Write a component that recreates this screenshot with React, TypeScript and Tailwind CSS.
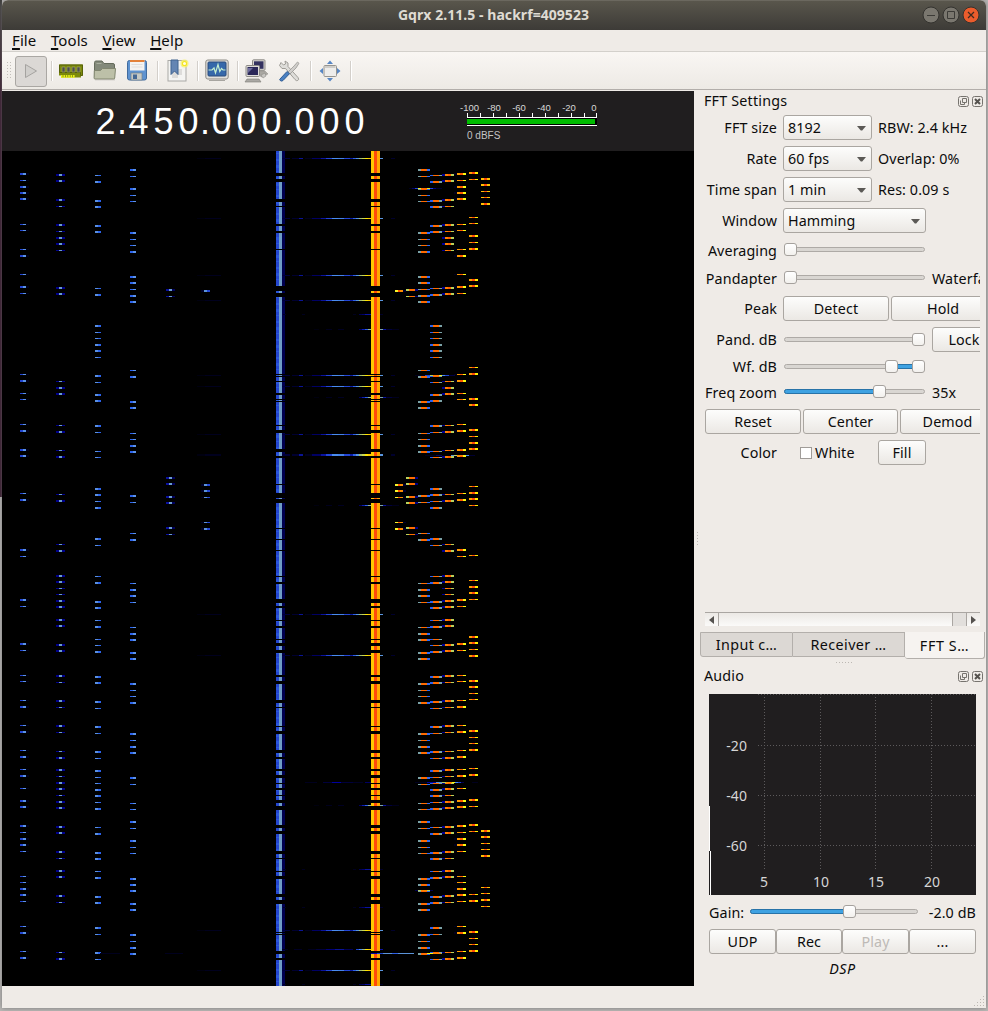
import React from "react";

/* Burst rows per channel: a positive value is the top of a 2px row, a negative one of a 1px row. */
const A = [173, -180, 186, 192, 198, -224, -230, -249, 255, -274, 286, -293, -374, 380, -393, -399, -424, 430, 449, 455, -493, 499, 549, -556, 599, -606, 643, -650, -675, -681, -700, 706, -725, 731, -750, 756, -769, 775, -788, 800, 806, 825, -832, 838, 844, -851, -876, -882, 888, 894, -901, -926, 932, -951, 957];
const B = [174, 180, 199, -206, 224, -231, 237, 243, -250, 287, 293, -381, 387, 393, -425, 431, -450, 456, -494, 500, -544, 550, 575, 581, -588, -594, 600, 606, 619, 625, 644, 650, 675, -682, 700, -707, 725, -732, -751, 757, 769, -776, 782, 788, -795, 801, 807, 826, 832, 851, -858, 870, 876, 895, -902, -952, 958];
const C = [-175, 181, 200, 206, 225, 231, -288, 294, 325, -332, -338, 344, 350, -357, 375, -382, 394, 400, 425, -432, -451, -457, 488, 494, -501, 507, 538, -545, -576, 582, 601, 607, -620, 626, -639, -645, 651, 676, 682, 701, -708, 726, -733, 751, -758, 770, -777, -783, 789, 795, -802, 808, -827, 833, 852, 858, -871, 877, 896, 902, 927, -934, 952, -959];
const D = [169, -176, 188, -195, -201, 232, -239, -245, 251, 276, 282, -289, 295, 301, -370, 376, 401, 407, -433, -439, 445, 451, 495, -502, -533, 539, -583, 589, 595, -602, -627, 633, 639, 652, 658, 683, -690, -696, 702, 733, -740, 746, 752, 777, -784, -803, -809, 821, -828, 840, -847, -853, 878, 884, 890, 903, 909, 934, -941, 947, 953];
const E = [289, -296, 477, 483, 496, 502, 527, -534];
const F = [290, 484, 490, -497, -522, 528];
const G = [172, -179, -217, -223, 235, -242, 248, 279, 285, -367, 373, 398, 404, 429, -436, 442, 448, -486, 492, 498, -505, -555, -580, 586, 592, -599, 636, 642, -649, 655, 680, 686, -693, -699, 730, -737, -743, 749, -768, 774, 799, -806, 824, -831, -894, 900, 931, -938, -944, 950];
const H = [178, 184, -191, -197, 203, 830, 836, -843, -849, 855, -887, -893, 899, -906];

type Seg = [number, number, string];
const CHANNELS: { rows: number[]; segs: Seg[] }[] = [
  { rows: A, segs: [[20, 3, "#2346d6"], [23, 3, "#5b93e6"], [26, 3, "#00001e"], [454, 3, "#00001e"], [457, 3, "#ff9a00"], [460, 3, "#ff5a00"], [463, 3, "#fbfb10"]] },
  { rows: B, segs: [[56, 3, "#00008c"], [59, 3, "#6b9ccd"], [62, 3, "#00008c"], [442, 3, "#000096"], [445, 3, "#ff8400"], [448, 3, "#ff5a00"], [451, 3, "#b9d35c"]] },
  { rows: C, segs: [[95, 3, "#5a90e2"], [98, 3, "#2b63ec"], [430, 3, "#2c64f0"], [433, 6, "#ff6a00"], [439, 3, "#7ba3a8"]] },
  { rows: D, segs: [[130, 3, "#2c64f0"], [133, 3, "#5b93ec"], [418, 3, "#7ba3a8"], [421, 6, "#ff6a00"], [427, 3, "#2e6cf4"]] },
  { rows: E, segs: [[166, 3, "#0a10a0"], [169, 3, "#6b9ccd"], [172, 3, "#00005c"], [406, 3, "#b9d35c"], [409, 6, "#ff6e00"], [415, 3, "#000082"]] },
  { rows: F, segs: [[201, 3, "#00002a"], [204, 3, "#5b93d8"], [207, 3, "#2346d6"], [395, 3, "#f6f628"], [398, 2, "#ff5000"], [400, 3, "#ff8c00"], [403, 3, "#000030"]] },
  { rows: G, segs: [[469, 3, "#ffa000"], [472, 3, "#ff4a0a"], [475, 3, "#ffee00"]] },
  { rows: H, segs: [[481, 3, "#ffc000"], [484, 3, "#ff4a0a"], [487, 3, "#ffc400"]] },
];

const GAPS: [number, number][] = [
  [173, 176], [179, 182], [199, 202], [206, 207], [224, 226], [231, 233], [249, 250], [286, 291], [293, 297],
  [374, 375], [376, 377], [381, 382], [393, 395], [399, 400], [401, 402], [425, 426], [430, 433], [449, 452], [456, 458],
  [484, 485], [493, 498], [499, 503], [528, 529], [539, 540], [550, 551], [576, 577], [582, 584], [599, 603], [606, 608],
  [620, 621], [626, 628], [639, 640], [643, 646], [650, 653], [675, 677], [681, 684], [700, 703], [707, 708], [726, 727],
  [731, 734], [750, 753], [757, 759], [769, 771], [775, 778], [783, 784], [788, 790], [795, 796], [800, 803], [806, 810],
  [825, 828], [831, 834], [851, 854], [858, 859], [871, 872], [876, 879], [894, 897], [900, 904], [932, 933], [934, 935],
  [951, 954], [958, 960],
];

const STRONG: Seg[] = [
  [197, 8, "#000010"], [205, 16, "#00001e"], [282, 8, "#00003c"], [292, 7, "#000030"], [299, 4, "#0a1496"], [305, 9, "#00001e"],
  [312, 9, "#000064"], [321, 5, "#0a14a0"], [326, 6, "#2346d6"], [332, 6, "#4a8cf0"], [338, 6, "#4682e8"], [344, 6, "#2346d6"],
  [350, 3, "#0a1eaa"], [353, 3, "#2d5fe6"], [356, 3, "#5a96e0"], [359, 3, "#a0be78"], [362, 3, "#c8d750"], [365, 3, "#ffe600"],
  [368, 3, "#ffc800"], [380, 3, "#5a96e0"], [391, 4, "#00002d"],
];
const SOFT: Seg[] = [
  [282, 6, "#00001e"], [294, 8, "#000024"], [308, 8, "#00001e"], [316, 10, "#00003c"], [326, 9, "#000078"], [335, 9, "#0a1496"],
  [344, 9, "#00005a"], [356, 3, "#1e46d2"], [359, 3, "#4a8cf0"], [362, 3, "#96b496"], [365, 3, "#ffe600"], [368, 3, "#ffc800"], [380, 3, "#0a14a0"],
];
const SHORT: Seg[] = [
  [314, 5, "#00000f"], [326, 6, "#00001e"], [338, 6, "#000022"], [359, 3, "#000064"], [362, 3, "#0a1eb4"], [365, 3, "#2d5fe6"],
  [368, 3, "#96b496"], [380, 3, "#7ba3a8"], [383, 3, "#0a14a0"], [386, 6, "#00003c"], [392, 7, "#00001e"],
];
const FAINT: Seg[] = [[283, 3, "#000028"], [302, 3, "#00001e"], [353, 3, "#00001e"], [359, 3, "#000050"], [362, 3, "#00006e"], [365, 3, "#0a14a0"], [368, 3, "#0a14a0"], [380, 3, "#000028"]];
const DIM: Seg[] = [[305, 12, "#00001e"], [323, 9, "#00003c"], [332, 9, "#0000a0"], [341, 12, "#00003c"], [353, 10, "#000024"], [365, 6, "#000064"]];
const RIGHT: Seg[] = [[409, 3, "#00001e"], [412, 3, "#000064"], [415, 3, "#1e46d2"], [418, 3, "#f0f020"], [421, 6, "#ff6a00"], [427, 3, "#f0f020"], [430, 3, "#2346d6"], [433, 3, "#00007c"], [436, 6, "#000032"]];
const RIGHT2: Seg[] = [[415, 12, "#00001e"], [427, 9, "#0000a0"], [436, 6, "#5b93d8"], [442, 4, "#b9d35c"], [446, 6, "#ff9000"], [452, 3, "#fbfb10"], [455, 3, "#4a8cf0"], [458, 3, "#1e46d2"], [461, 3, "#000050"], [472, 6, "#00001e"]];
const RIGHT3: Seg[] = [[415, 10, "#00001e"], [425, 5, "#1e46d2"], [430, 3, "#b9d35c"], [433, 6, "#ff7800"], [439, 3, "#f0f020"], [442, 3, "#4a8cf0"], [445, 4, "#1e46d2"], [449, 6, "#000046"]];
const STREAKS: [number, Seg[]][] = [
  [158, STRONG], [218, STRONG], [275, STRONG], [300, STRONG], [386, STRONG], [434, STRONG], [454, STRONG], [455, STRONG],
  [375, STRONG], [614, STRONG], [655, STRONG], [930, STRONG], [949, SOFT], [970, STRONG],
  [329, SHORT], [397, SHORT], [505, SHORT], [805, SHORT], [314, FAINT], [869, FAINT], [907, FAINT], [984, FAINT], [782, DIM],
  [188, RIGHT], [375, RIGHT3], [782, RIGHT2], [890, [[415, 3, "#000050"], [418, 3, "#b9d35c"], [421, 6, "#ff8400"], [427, 3, "#b9d35c"], [430, 3, "#000050"]]],
  [455, [[425, 15, "#00001e"], [436, 6, "#000064"], [451, 3, "#5b93d8"], [454, 3, "#b9d35c"], [457, 6, "#ff8400"], [463, 3, "#f0f020"], [466, 3, "#4a8cf0"], [469, 6, "#000032"]]],
  [953, [[100, 20, "#00001e"], [165, 18, "#00001e"], [371, 6, "#0000a0"], [377, 6, "#1e46d2"], [383, 9, "#5b93d8"], [392, 6, "#2d5fe6"], [398, 16, "#5b93d8"], [418, 3, "#7ba3a8"], [427, 6, "#fbfb10"], [433, 8, "#ff8400"]]],
];

function Waterfall() {
  return (
    <svg className="block h-[835px] w-[692px] bg-black" viewBox="2 151 692 835" shapeRendering="crispEdges">
      <rect x="276" y="151" width="3" height="835" fill="#2446cf" />
      {Array.from({ length: 139 }, (_, i) => (
        <rect key={i} x="276" y={153 + i * 6} width="3" height={(i % 3) + 1} fill="#2a55dc" />
      ))}
      <rect x="279" y="151" width="3" height="835" fill="#6f9dc6" />
      <rect x="282" y="151" width="3" height="835" fill="#000050" />
      <rect x="371" y="151" width="3" height="835" fill="#ffc800" />
      <rect x="374" y="151" width="3" height="835" fill="#ff4b0a" />
      <rect x="377" y="151" width="3" height="835" fill="#ffa800" />
      {GAPS.map(([a, b]) => (
        <g key={a} fill="#000">
          <rect x="276" y={a} width="9" height={b - a} />
          <rect x="371" y={a} width="9" height={b - a} />
        </g>
      ))}
      {CHANNELS.map((c, i) =>
        c.rows.map((r) =>
          c.segs.map(([x, w, f]) => <rect key={`${i}-${r}-${x}`} x={x} y={Math.abs(r)} width={w} height={r < 0 ? 1 : 2} fill={f} />)
        )
      )}
      {STREAKS.map(([y, segs], i) =>
        segs.map(([x, w, f]) => <rect key={`s${i}-${x}`} x={x} y={y} width={w} height="1" fill={f} />)
      )}
    </svg>
  );
}

const BTN_BASE = "flex h-[25px] shrink-0 items-center rounded-[3px] border border-[#aaa6a1] bg-linear-to-b from-[#fdfdfc] to-[#ebe8e4] ";
const BTN = BTN_BASE + "justify-center ";

function Combo({ text, wide }: { text: string; wide?: boolean }) {
  return (
    <div className={BTN_BASE + "justify-between pr-[5px] pl-[4px] " + (wide ? "w-[143px]" : "w-[89px]")}>
      <span>{text}</span>
      <svg className="mt-0.5" width="9" height="5" viewBox="0 0 9 5"><path d="M0 0h9L5.200 4.600H3.800z" fill="#5b5956" /></svg>
    </div>
  );
}

function Slider({ width, handles, fill }: { width: number; handles: number[]; fill?: [number, number] }) {
  return (
    <div className="relative h-[13px] shrink-0" style={{ width }}>
      <div className="absolute inset-x-0 top-[4px] h-[5px] rounded-sm border border-[#aeaaa6] bg-[#d9d6d2]" />
      {fill && <div className="absolute top-[4px] h-[5px] rounded-sm border border-[#2873a8] bg-[#3fa2e2]" style={{ left: fill[0], width: fill[1] - fill[0] }} />}
      {handles.map((h) => (
        <div key={h} className="absolute top-0 size-[13px] rounded-[3px] border border-[#a5a19d] bg-linear-to-b from-white to-[#f3f1ee]" style={{ left: h }} />
      ))}
    </div>
  );
}

function Row({ label, h, low, children }: { label: string; h: string; low?: boolean; children: React.ReactNode }) {
  return (
    <div className={"flex shrink-0 items-center " + h}>
      <div className={"mr-1.5 w-[83px] shrink-0 text-right " + (low ? "pt-0.5" : "")}>{label}</div>
      {children}
    </div>
  );
}

function DockTitle({ text }: { text: string }) {
  return (
    <div className="flex h-5 shrink-0 items-center pr-[3px] pl-[10px]">
      <span className="grow tracking-[0.2px]">{text}</span>
      <svg className="mr-[3px]" width="11" height="11" viewBox="0 0 11 11" fill="none" stroke="#77746f">
        <rect x=".5" y=".5" width="10" height="10" rx="2" />
        <path d="M4.500 2.500h4v4h-4zM2.500 4.500v4h4v-2" />
      </svg>
      <svg width="11" height="11" viewBox="0 0 11 11" fill="none" stroke="#77746f">
        <rect x=".5" y=".5" width="10" height="10" rx="2" />
        <path d="M3 3l5 5M8 3L3 8" stroke="#55524e" strokeWidth="2" />
      </svg>
    </div>
  );
}

function Sep({ m }: { m: string }) {
  return <div className={"h-5 w-px shrink-0 bg-[#d3cfca] shadow-[1px_0_0_#fff] " + m} />;
}

function Icon({ m, children }: { m: string; children: React.ReactNode }) {
  return <svg className={"shrink-0 " + m} width="24" height="24" viewBox="0 0 24 24">{children}</svg>;
}

function Toolbar() {
  return (
    <div className="flex h-[39px] shrink-0 items-center border-t border-b border-t-[#d3d0cb] border-b-[#b2aeaa] bg-linear-to-b from-[#f9f6f3] to-[#edeae5]">
      <svg className="ml-[5px] shrink-0" width="5" height="17" viewBox="0 0 5 17" fill="#c2beb9">
        {[0, 3, 6, 9, 12, 15].map((y) => <g key={y}><rect y={y} width="1" height="1" /><rect x="3" y={y} width="1" height="1" /></g>)}
      </svg>
      <div className="mt-px ml-[3px] flex h-[31px] w-8 shrink-0 items-center justify-center rounded-[3px] border border-[#aaa7a3] bg-[#dbd8d5]">
        <svg width="14" height="16" viewBox="0 0 14 16"><path d="M1.500 1.500L12.500 8 1.500 14.500z" fill="#d0cecb" stroke="#a5a3a0" /></svg>
      </div>
      <Sep m="ml-[4px]" />
      <Icon m="ml-[7px]">
        <path d="M0 5.500h24v11h-2v2H2v-2H0z" fill="#7c8a0b" />
        <path d="M.5 6h23v10.500h-2v-3H.5z" fill="none" stroke="#56610a" />
        <g fill="#4d4f4b" stroke="#a4a86d" strokeWidth=".6"><path d="M3 8h3v5H3zM8 8h3v5H8zM13 8h3v5h-3zM18 8h3v5h-3z" /></g>
        <path d="M2 17.500h14" fill="none" stroke="#e7ef1c" strokeWidth="3" strokeDasharray="1.600 .8" />
      </Icon>
      <Icon m="ml-[10px]">
        <path d="M1.500 18V3.500q0-1.500 1.500-1.500h6l2 2.500h9q1.500 0 1.500 1.500v6H1.500z" fill="#83897a" stroke="#656b5c" />
        <path d="M3.500 4.500h5" stroke="#a9ae9f" />
        <path d="M1.300 11.500h6.200l2-2h13l-.8 9.500q-.1 1-1 1H2q-.9 0-.9-1z" fill="#bdc0a8" stroke="#81866f" />
        <path d="M2 20.800h20" stroke="#aaa8a2" opacity=".6" />
      </Icon>
      <Icon m="ml-[8px]">
        <rect x="2.500" y="1.500" width="19" height="19.500" rx="2" fill="#5f93d0" stroke="#426c9e" />
        <rect x="5" y="1" width="14.500" height="10.500" fill="#f4f3f2" />
        <rect x="5" y="1" width="14.500" height="2" fill="#e3813a" />
        <path d="M6.500 5.500h11M6.500 8h11" stroke="#dfdedd" />
        <rect x="6" y="14" width="11" height="7" fill="#c6c9c4" stroke="#73828e" strokeWidth=".7" />
        <rect x="8" y="15.500" width="4" height="4.500" fill="#456894" />
      </Icon>
      <Sep m="ml-[8px]" />
      <Icon m="ml-[8px]">
        <rect x="2" y="1.500" width="18" height="20.500" fill="#f4f4f2" stroke="#aaa9a6" />
        <path d="M6 10h10v6h-4v3H6z" fill="#dddcda" />
        <path d="M5 1h7v14.500L8.500 12 5 15.500z" fill="#6485b3" stroke="#3f628f" />
        <circle cx="18.500" cy="4.500" r="4" fill="#f9f26b" opacity=".8" />
        <circle cx="18.500" cy="4.500" r="2.600" fill="#f5e51e" />
        <circle cx="18.500" cy="4.500" r="1.500" fill="#fffde5" />
      </Icon>
      <Sep m="ml-[7px]" />
      <Icon m="ml-[7px]">
        <rect x=".8" y="1" width="22.400" height="19" rx="2" fill="#e1e0dc" stroke="#8c8a85" />
        <rect x="3" y="3" width="18" height="14" rx="1" fill="#3568aa" stroke="#2a4b7b" />
        <path d="M3.500 11h3.500l2-2 1.500 5L13 5.500l1.800 7 1.700-3L18 11h2.500" fill="none" stroke="#c4efcf" strokeWidth="1.200" />
        <path d="M4 21.500h16" stroke="#a7a5a0" />
      </Icon>
      <Sep m="ml-[8px]" />
      <Icon m="ml-[6px]">
        <rect x="8.500" y=".8" width="12.500" height="10.500" rx="1" fill="#d7d5d0" stroke="#8d8b86" />
        <rect x="10" y="2.300" width="9.500" height="7.500" fill="#34325f" />
        <path d="M14 12h7l3 3-7 3z" fill="#aaa8a2" stroke="#8d8b86" strokeWidth=".5" />
        <rect x="2" y="6.500" width="13.500" height="11" rx="1" fill="#dfddd9" stroke="#8d8b86" />
        <rect x="3.500" y="8" width="10.500" height="8" fill="#2b2858" />
        <path d="M4 9l5 0-5 5z" fill="#6f6d9d" />
        <path d="M3 20h12l2 3H1z" fill="#aaa8a4" stroke="#7e7c77" strokeWidth=".6" />
        <path d="M17 16l4-2 1 3-3 2z" fill="#c8c6c2" stroke="#8d8b86" strokeWidth=".6" />
      </Icon>
      <Icon m="ml-[9px]">
        <path d="M4 3.500l2.500 2.500 2-1-.5-3 3 2v3.500L21 18.500q1.500 2-.3 3-1.200.8-2.700-1L8.500 9.500 5 9.500 2.500 6.500z" fill="#deddd9" stroke="#96948f" strokeWidth=".9" />
        <path d="M20.500 3l1.500 1.300-3 4.700-6 6-2-2 6-6z" fill="#d0cecb" stroke="#9b9994" strokeWidth=".8" />
        <path d="M3 20l7-7.500 2.500 2.200L6 21.500q-1.500 1.200-2.800 0-1-.8-.2-1.500z" fill="#4a80c1" stroke="#315d94" />
      </Icon>
      <Sep m="ml-[9px]" />
      <Icon m="ml-[7px]">
        <rect x="6" y="6.500" width="12.500" height="11" rx="1" fill="#eeedeb" stroke="#96948f" />
        <path d="M7 8h10.500" stroke="#c4c2be" strokeWidth="1.500" />
        <path d="M12 1.500L15 5H9zM12 22.500L15 19H9zM1.500 12L5 9v6zM22.500 12L19 9v6z" fill="#5686c4" />
      </Icon>
      <Sep m="ml-[8px]" />
    </div>
  );
}

function Dots({ className, cols, rows }: { className?: string; cols: number; rows: number }) {
  return (
    <svg className={className} width={cols * 3} height={rows * 3} fill="#bcb8b3">
      {Array.from({ length: cols * rows }, (_, i) => <rect key={i} x={(i % cols) * 3} y={Math.floor(i / cols) * 3} width="1" height="1" />)}
    </svg>
  );
}

function Meter() {
  return (
    <svg className="block" width="150" height="50" viewBox="455 98 150 50">
      <g fill="#d8d8d8" fontFamily="Liberation Sans, Arial, sans-serif" fontSize="9.500" textAnchor="middle">
        {["-100", "-80", "-60", "-40", "-20", "0"].map((t, i) => <text key={t} x={[469.5, 494, 519, 544, 569, 594][i]} y="111">{t}</text>)}
        <text x="467" y="139" textAnchor="start" fill="#c4c4c4" fontSize="10">0 dBFS</text>
      </g>
      <g shapeRendering="crispEdges">
        <path d="M467 117h130v1h-130zM467 125h130v1h-130z" fill="#fff" />
        {Array.from({ length: 11 }, (_, i) => <rect key={i} x={i === 10 ? 596 : 467 + i * 13} y="113" width="1" height="4" fill="#fff" />)}
        <rect x="467" y="118" width="130" height="7" fill="#000" />
        <rect x="467" y="119" width="128" height="5" fill="#00bb00" />
      </g>
    </svg>
  );
}

function AudioPlot() {
  return (
    <svg className="block" width="267" height="201" viewBox="709 694 267 201">
      <rect x="709" y="694" width="267" height="201" fill="#201e1f" />
      <g stroke="#5c5a5b" strokeDasharray="1 2" shapeRendering="crispEdges">
        {[764.5, 820.5, 875.5, 931.5].map((x) => <path key={x} d={`M${x} 694V869`} />)}
        {[694.5, 745.5, 795.5, 845.5].map((y) => <path key={y} d={`M758 ${y}H976`} />)}
      </g>
      <path d="M709.500 806v45M710.500 851v44" stroke="#fff" shapeRendering="crispEdges" />
      <g fill="#d6d6d6" fontSize="14">
        {[["-20", 751], ["-40", 801], ["-60", 851]].map(([t, y]) => <text key={t} x="747" y={y} textAnchor="end">{t}</text>)}
        {[["5", 764], ["10", 821], ["15", 876], ["20", 932]].map(([t, x]) => <text key={t} x={x} y="887" textAnchor="middle">{t}</text>)}
      </g>
    </svg>
  );
}

export default function App() {
  return (
    <div className="flex h-[1011px] w-[988px] overflow-hidden bg-[#bab8b6] font-['Noto_Sans',sans-serif] text-[14.3px] leading-5 tracking-[0.1px] whitespace-nowrap text-[#0c0c0c]">
      <div className="h-[497px] w-0.5 shrink-0 bg-linear-to-b from-[#3a3a38] via-[#2c0a22] via-20% to-[#2c0a22]" />
      <div className="relative flex h-[1008px] w-[984px] shrink-0 flex-col overflow-hidden rounded-t-[6px] bg-[#efebe7] shadow-[0_0_5px_#777]">
        <header className="relative flex h-[30px] shrink-0 items-center justify-center border-t border-[#6b685f] bg-linear-to-b from-[#59564c] to-[#3d3b37] pb-0.5">
          <span className="mr-px text-[14px] font-bold tracking-[0.05px] text-[#dfdbd2]">Gqrx 2.11.5 - hackrf=409523</span>
          <svg className="absolute top-[5px] right-[6px]" width="58" height="18" viewBox="0 0 58 18" fill="none">
            <circle cx="9" cy="9" r="8" fill="#7a776f" stroke="#34332f" />
            <circle cx="29" cy="9" r="8" fill="#7a776f" stroke="#34332f" />
            <circle cx="49" cy="9" r="8" fill="#eb5c2c" stroke="#34332f" />
            <path d="M5 9.500h8M25.500 5.500h7v7h-7z" stroke="#3c3b37" />
            <path d="M46 6l6 6M52 6l-6 6" stroke="#3c2a20" strokeWidth="1.200" />
          </svg>
        </header>
        <nav className="flex h-[21px] shrink-0 items-center gap-[14.5px] pb-0.5 pl-[10px] text-[15px] tracking-[0.1px]">
          {["File", "Tools", "View", "Help"].map((m) => (
            <span key={m}><span className="underline decoration-2 underline-offset-2">{m[0]}</span>{m.slice(1)}</span>
          ))}
        </nav>
        <Toolbar />
        <div className="mt-px flex h-[895px] shrink-0">
          <main className="w-[692px] shrink-0">
            <div className="flex h-[60px] items-start bg-[#201e1f]">
              <div className="ml-[91px] flex h-[62px] w-[362px] items-center font-['Liberation_Sans',Arial,sans-serif] text-[36px] tracking-normal text-white">
                {"2.450.000.000".split("").map((c, i) => (
                  <span key={i} className={c === "." ? "flex w-[8px] justify-center" : "flex w-[25px] justify-center"}>{c}</span>
                ))}
              </div>
              <div className="pt-[7px] tracking-normal"><Meter /></div>
            </div>
            <Waterfall />
          </main>
          <aside className="flex w-[292px] shrink-0 flex-col">
            <div className="flex h-[535px] w-[286px] shrink-0 flex-col">
              <div className="w-[292px]"><DockTitle text="FFT Settings" /></div>
              <div className="mt-px flex flex-col overflow-hidden">
                <Row label="FFT size" h="h-[31px]"><Combo text="8192" /><span className="ml-[6px]">RBW: 2.4 kHz</span></Row>
                <Row label="Rate" h="h-[31px]"><Combo text="60 fps" /><span className="ml-[6px]">Overlap: 0%</span></Row>
                <Row label="Time span" h="h-[31px]"><Combo text="1 min" /><span className="ml-[6px]">Res: 0.09 s</span></Row>
                <Row label="Window" h="h-[31px]"><Combo text="Hamming" wide /></Row>
                <Row label="Averaging" h="h-[28px]" low><div className="ml-px pb-px"><Slider width={141} handles={[0]} /></div></Row>
                <Row label="Pandapter" h="h-[28px]" low><div className="ml-px pb-px"><Slider width={141} handles={[0]} /></div><span className="ml-[7px] pt-0.5">Waterfall</span></Row>
                <Row label="Peak" h="h-[33px]"><div className={BTN + "w-[106px]"}>Detect</div><div className={BTN + "ml-0.5 w-[104px]"}>Hold</div></Row>
                <Row label="Pand. dB" h="h-[29px]"><div className="ml-px"><Slider width={141} handles={[128]} /></div><div className={BTN + "ml-[7px] w-[64px]"}>Lock</div></Row>
                <Row label="Wf. dB" h="h-[25px]"><div className="ml-px"><Slider width={141} handles={[101, 128]} fill={[110, 132]} /></div></Row>
                <Row label="Freq zoom" h="h-[27px]"><div className="ml-px pb-0.5"><Slider width={141} handles={[89]} fill={[0, 93]} /></div><span className="ml-[7px]">35x</span></Row>
                <div className="flex h-[31px] shrink-0 items-center gap-0.5 pl-[11px]">
                  <div className={BTN + "w-[96px]"}>Reset</div><div className={BTN + "w-[95px]"}>Center</div><div className={BTN + "w-[95px]"}>Demod</div>
                </div>
                <Row label="Color" h="h-[31px]">
                  <div className="ml-[17px] size-3 border border-[#a09c98] bg-white" />
                  <span className="ml-[3px] w-[63px]">White</span>
                  <div className={BTN + "w-[48px]"}>Fill</div>
                </Row>
              </div>
              <Dots className="mt-[64px] ml-[3px]" cols={1} rows={5} />
              <div className="mt-auto ml-[11px] flex h-[14px] w-[275px] shrink-0 items-center justify-between border-t border-[#aaa6a2] bg-linear-to-b from-[#ece9e5] to-[#fbfaf9]">
                <div className="flex h-full w-[14px] items-center justify-center border-r border-[#aaa6a2]"><svg width="5" height="8"><path d="M5 0v8L0 4z" fill="#55524f" /></svg></div>
                <div className="ml-auto h-full w-[15px] border-x border-[#aaa6a2] bg-[#e2dfdc]" />
                <div className="flex h-full w-[13px] items-center justify-center"><svg width="5" height="8"><path d="M0 0v8l5-4z" fill="#55524f" /></svg></div>
              </div>
            </div>
            <div className="mt-[6px] flex h-[28px] shrink-0 items-start pl-[6px]">
              <div className="flex h-[25px] w-[93px] items-center justify-center rounded-bl-[3px] border border-[#b3afab] bg-[#dcd8d4] tracking-[0.4px]">Input c…</div>
              <div className="flex h-[25px] w-[112px] items-center justify-center border border-l-0 border-[#b3afab] bg-[#dcd8d4] tracking-[0.4px]">Receiver …</div>
              <div className="flex h-[27px] w-[80px] items-center justify-center rounded-b-[3px] border border-t-0 border-l-0 border-[#b3afab] bg-[#f6f3f0] pt-px tracking-[0.6px]">FFT S…</div>
            </div>
            <Dots className="mt-[2px] ml-[142px] shrink-0" cols={6} rows={1} />
            <div className="mt-px shrink-0"><DockTitle text="Audio" /></div>
            <div className="mt-[8px] ml-[15px] w-[267px]">
              <AudioPlot />
              <div className="flex h-[34px] items-center">
                <span className="w-[41px] pt-0.5">Gain:</span>
                <div className="pb-px"><Slider width={168} handles={[93]} fill={[0, 97]} /></div>
                <span className="grow pt-0.5 text-right">-2.0 dB</span>
              </div>
              <div className="flex">
                <div className={BTN + "w-[67px]"}>UDP</div>
                <div className={BTN + "w-[66px]"}>Rec</div>
                <div className={BTN + "w-[67px] text-[#bebab6]"}>Play</div>
                <div className={BTN + "w-[67px]"}>...</div>
              </div>
              <div className="mt-[5px] text-center tracking-[0.6px] italic">DSP</div>
            </div>
          </aside>
        </div>
        <svg className="mt-[10px] mr-px ml-auto shrink-0" width="11" height="11" fill="#bcb8b3">
          {[0, 1, 2, 3].flatMap((r) => Array.from({ length: r + 1 }, (_, c) => <rect key={`${r}${c}`} x={9 - c * 3} y={r * 3} width="1" height="1" />))}
        </svg>
      </div>
    </div>
  );
}
